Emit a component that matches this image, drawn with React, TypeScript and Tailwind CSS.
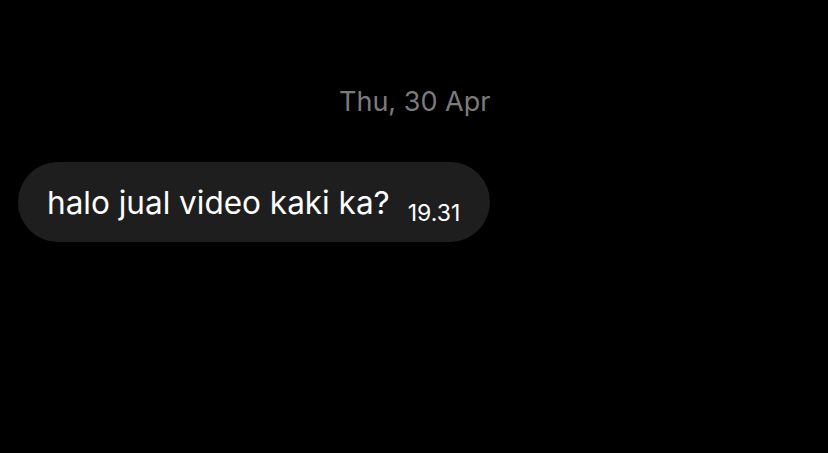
export default function App() {
  return (
    <div className="w-[828px] h-[453px] bg-black overflow-hidden" style={{ fontFamily: 'Inter, "Noto Sans", sans-serif' }}>
      <div className="pt-[86px] pl-[339px] text-[27px] leading-[32px] text-[#7b7b7b]">Thu, 30 Apr</div>
      <div className="mt-[44px] ml-[18px] inline-flex items-start h-[80px] rounded-[40px] bg-[#1e1e1e] pl-[29px] pr-[30px] pt-[22px]">
        <span className="text-[31.5px] leading-[38px] text-white">halo jual video kaki ka?</span>
        <span className="ml-[18px] mt-[15px] text-[23px] leading-[28px] text-white">19.31</span>
      </div>
    </div>
  );
}
